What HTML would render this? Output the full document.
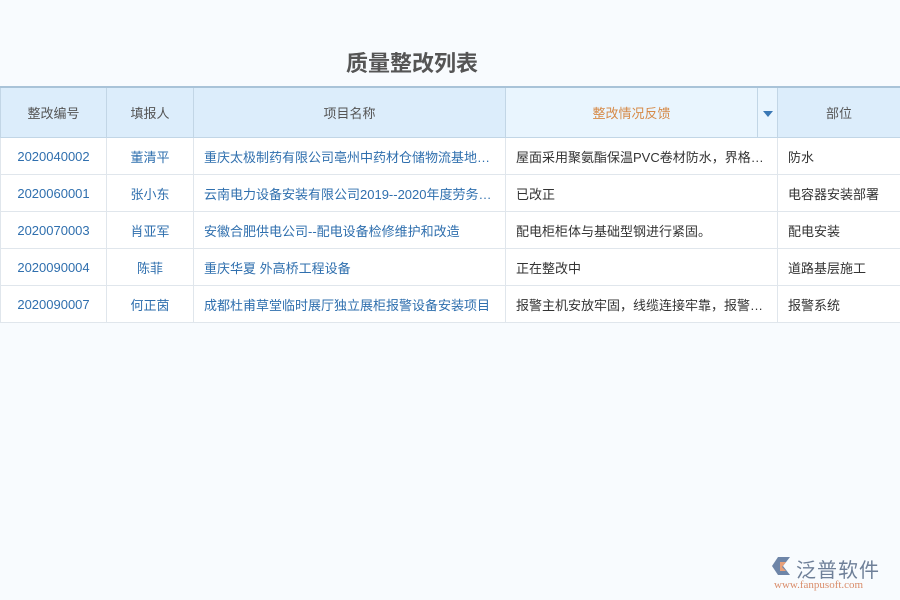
<!DOCTYPE html>
<html><head><meta charset="utf-8"><style>
body{margin:0;width:900px;height:600px;background:#f8fbfe;font-family:"Liberation Sans","Noto Sans CJK SC",sans-serif;position:relative;overflow:hidden}
.title{position:absolute;left:0;width:824px;top:46px;text-align:center;font-size:22px;font-weight:bold;color:#555}
table{position:absolute;top:86px;left:0;border-collapse:collapse;width:900px;table-layout:fixed;font-size:13px}
th{height:49px;padding:0;background:#dcedfb;color:#555;font-weight:normal;border:1px solid #c2d6e6;border-top:2px solid #a9c3d8}
th.f{background:#e9f5fe;color:#d68a48}
td{height:36px;padding:0 10px;border:1px solid #e0e6ec;background:#fff;color:#333;white-space:nowrap;overflow:hidden}
td.c{text-align:center;color:#2f6fae;padding:0}
td.b{color:#2f6fae}
</style></head><body>
<div class="title">质量整改列表</div>
<table>
<colgroup><col style="width:106px"><col style="width:87px"><col style="width:312px"><col style="width:252px"><col style="width:20px"><col style="width:123px"></colgroup>
<tr><th>整改编号</th><th>填报人</th><th>项目名称</th><th class="f">整改情况反馈</th><th class="f"><span style="display:inline-block;border-left:5px solid transparent;border-right:5px solid transparent;border-top:6px solid #3a78b5"></span></th><th>部位</th></tr>
<tr><td class="c">2020040002</td><td class="c">董清平</td><td class="b">重庆太极制药有限公司亳州中药材仓储物流基地…</td><td colspan="2">屋面采用聚氨酯保温PVC卷材防水，界格…</td><td>防水</td></tr>
<tr><td class="c">2020060001</td><td class="c">张小东</td><td class="b">云南电力设备安装有限公司2019--2020年度劳务…</td><td colspan="2">已改正</td><td>电容器安装部署</td></tr>
<tr><td class="c">2020070003</td><td class="c">肖亚军</td><td class="b">安徽合肥供电公司--配电设备检修维护和改造</td><td colspan="2">配电柜柜体与基础型钢进行紧固。</td><td>配电安装</td></tr>
<tr><td class="c">2020090004</td><td class="c">陈菲</td><td class="b">重庆华夏 外高桥工程设备</td><td colspan="2">正在整改中</td><td>道路基层施工</td></tr>
<tr><td class="c">2020090007</td><td class="c">何正茵</td><td class="b">成都杜甫草堂临时展厅独立展柜报警设备安装项目</td><td colspan="2">报警主机安放牢固，线缆连接牢靠，报警…</td><td>报警系统</td></tr>
</table>
<div style="position:absolute;left:770px;top:556px;width:22px;height:20px">
<svg width="22" height="20"><path d="M8 1 L20 1 L13 10 L20 19 L8 19 L2 10Z" fill="#6e85a8"/><path d="M10 6 L16 6 L12 11 L16 15 L10 15Z" fill="#e8a07a"/></svg></div>
<div style="position:absolute;left:796px;top:554px;font-size:20px;color:#6e7f98;letter-spacing:1px">泛普软件</div>
<div style="position:absolute;left:774px;top:579px;font-size:11px;color:#d98c6a;font-family:'Liberation Serif',serif">www.fanpusoft.com</div>
</body></html>
